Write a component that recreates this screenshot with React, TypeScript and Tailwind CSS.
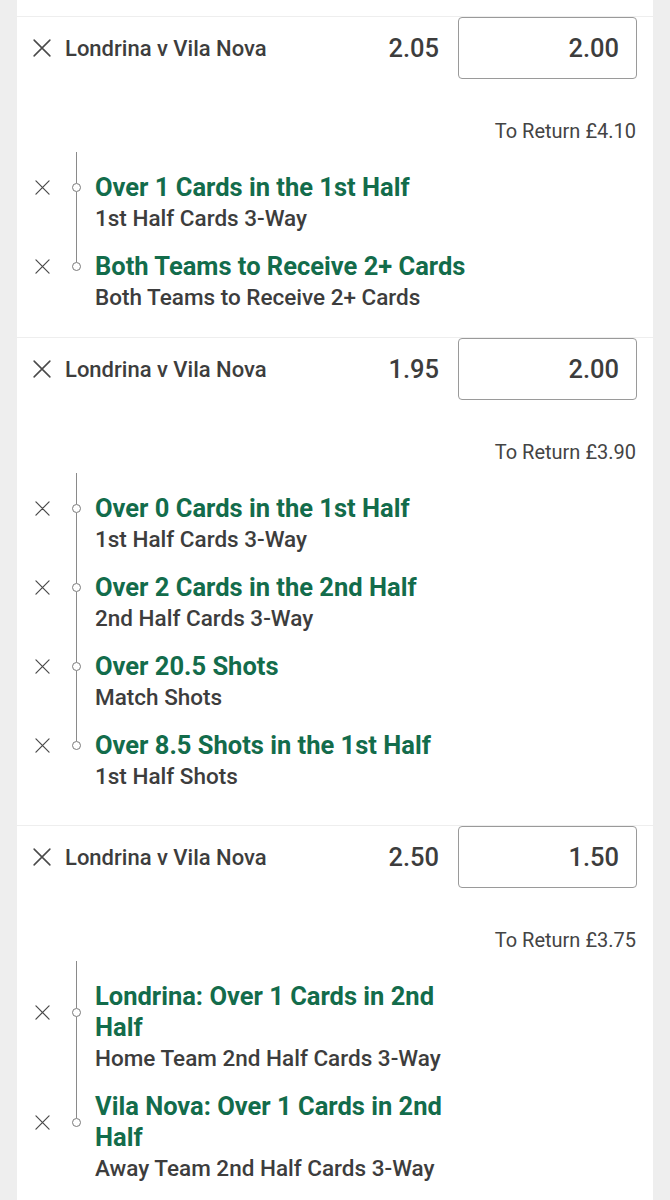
const font = { fontFamily: "Roboto, 'Liberation Sans', sans-serif" };

type Leg = { title: string; market: string };

type Bet = {
  odds: string;
  stake: string;
  toReturn: string;
  legs: Leg[];
  bottom: string;
};

const bets: Bet[] = [
  {
    odds: "2.05",
    stake: "2.00",
    toReturn: "£4.10",
    bottom: "pb-[24px]",
    legs: [
      { title: "Over 1 Cards in the 1st Half", market: "1st Half Cards 3-Way" },
      { title: "Both Teams to Receive 2+ Cards", market: "Both Teams to Receive 2+ Cards" },
    ],
  },
  {
    odds: "1.95",
    stake: "2.00",
    toReturn: "£3.90",
    bottom: "pb-[33px]",
    legs: [
      { title: "Over 0 Cards in the 1st Half", market: "1st Half Cards 3-Way" },
      { title: "Over 2 Cards in the 2nd Half", market: "2nd Half Cards 3-Way" },
      { title: "Over 20.5 Shots", market: "Match Shots" },
      { title: "Over 8.5 Shots in the 1st Half", market: "1st Half Shots" },
    ],
  },
  {
    odds: "2.50",
    stake: "1.50",
    toReturn: "£3.75",
    bottom: "pb-[33px]",
    legs: [
      { title: "Londrina: Over 1 Cards in 2nd Half", market: "Home Team 2nd Half Cards 3-Way" },
      { title: "Vila Nova: Over 1 Cards in 2nd Half", market: "Away Team 2nd Half Cards 3-Way" },
    ],
  },
];

function Cross({ size, stroke }: { size: number; stroke: number }) {
  return (
    <svg width={size} height={size} viewBox="0 0 16 16" fill="none">
      <path d="M1 1L15 15M15 1L1 15" stroke="#4a4a4a" strokeWidth={stroke} strokeLinecap="round" />
    </svg>
  );
}

function LegRow({ leg, first, last }: { leg: Leg; first: boolean; last: boolean }) {
  return (
    <div>
      {/* rail segment above title */}
      <div className="flex">
        <div className="w-[50px]" />
        <div className={`flex w-[18px] justify-center ${first ? "h-[20px]" : "h-[17px]"}`}>
          <div className="w-px bg-[#8a8a8a]" />
        </div>
      </div>

      <div className="flex items-center">
        <div className="flex w-[50px] justify-center">
          <Cross size={15} stroke={1.3} />
        </div>
        <div className="flex w-[18px] flex-col items-center self-stretch">
          <div className="w-px flex-1 bg-[#8a8a8a]" />
          <div className="h-[9px] w-[9px] rounded-full border border-[#7a7a7a] bg-white" />
          <div className={`w-px flex-1 ${last ? "bg-transparent" : "bg-[#8a8a8a]"}`} />
        </div>
        <div className="ml-[10px] w-[380px] text-[25.5px] font-bold leading-[31px] text-[#136c4b]">
          {leg.title}
        </div>
      </div>

      <div className="flex">
        <div className="w-[50px]" />
        <div className="flex w-[18px] justify-center">
          <div className={`w-px ${last ? "bg-transparent" : "bg-[#8a8a8a]"}`} />
        </div>
        <div className="ml-[10px] text-[22.5px] font-medium leading-[31px] text-[#3d3d3d]">
          {leg.market}
        </div>
      </div>
    </div>
  );
}

function BetSection({ bet }: { bet: Bet }) {
  return (
    <section className={`border-t border-[#eeeeee] ${bet.bottom}`}>
      <div className="flex h-[62px] items-center pl-4 pr-4">
        <Cross size={18} stroke={1.4} />
        <span className="ml-[14px] flex-1 text-[22px] font-medium text-[#3d3d3d]">
          Londrina v Vila Nova
        </span>
        <span className="text-[25.5px] font-medium text-[#3d3d3d]">{bet.odds}</span>
        <div className="ml-[19px] flex h-[62px] w-[179px] items-center justify-end rounded-[4px] border border-[#9a9a9a] pr-[17px]">
          <span className="text-[25.5px] font-medium text-[#3d3d3d]">{bet.stake}</span>
        </div>
      </div>

      <div className="mt-[40px] pr-[17px] text-right text-[20px] leading-[24px] text-[#444444]">
        To Return {bet.toReturn}
      </div>

      <div className="mt-[9px]">
        {bet.legs.map((leg, i) => (
          <LegRow key={i} leg={leg} first={i === 0} last={i === bet.legs.length - 1} />
        ))}
      </div>
    </section>
  );
}

export default function App() {
  return (
    <div className="min-h-[1200px] bg-[#eeeeee] px-[17px]" style={font}>
      <div className="min-h-[1200px] bg-white pt-4">
        {bets.map((bet, i) => (
          <BetSection key={i} bet={bet} />
        ))}
      </div>
    </div>
  );
}
